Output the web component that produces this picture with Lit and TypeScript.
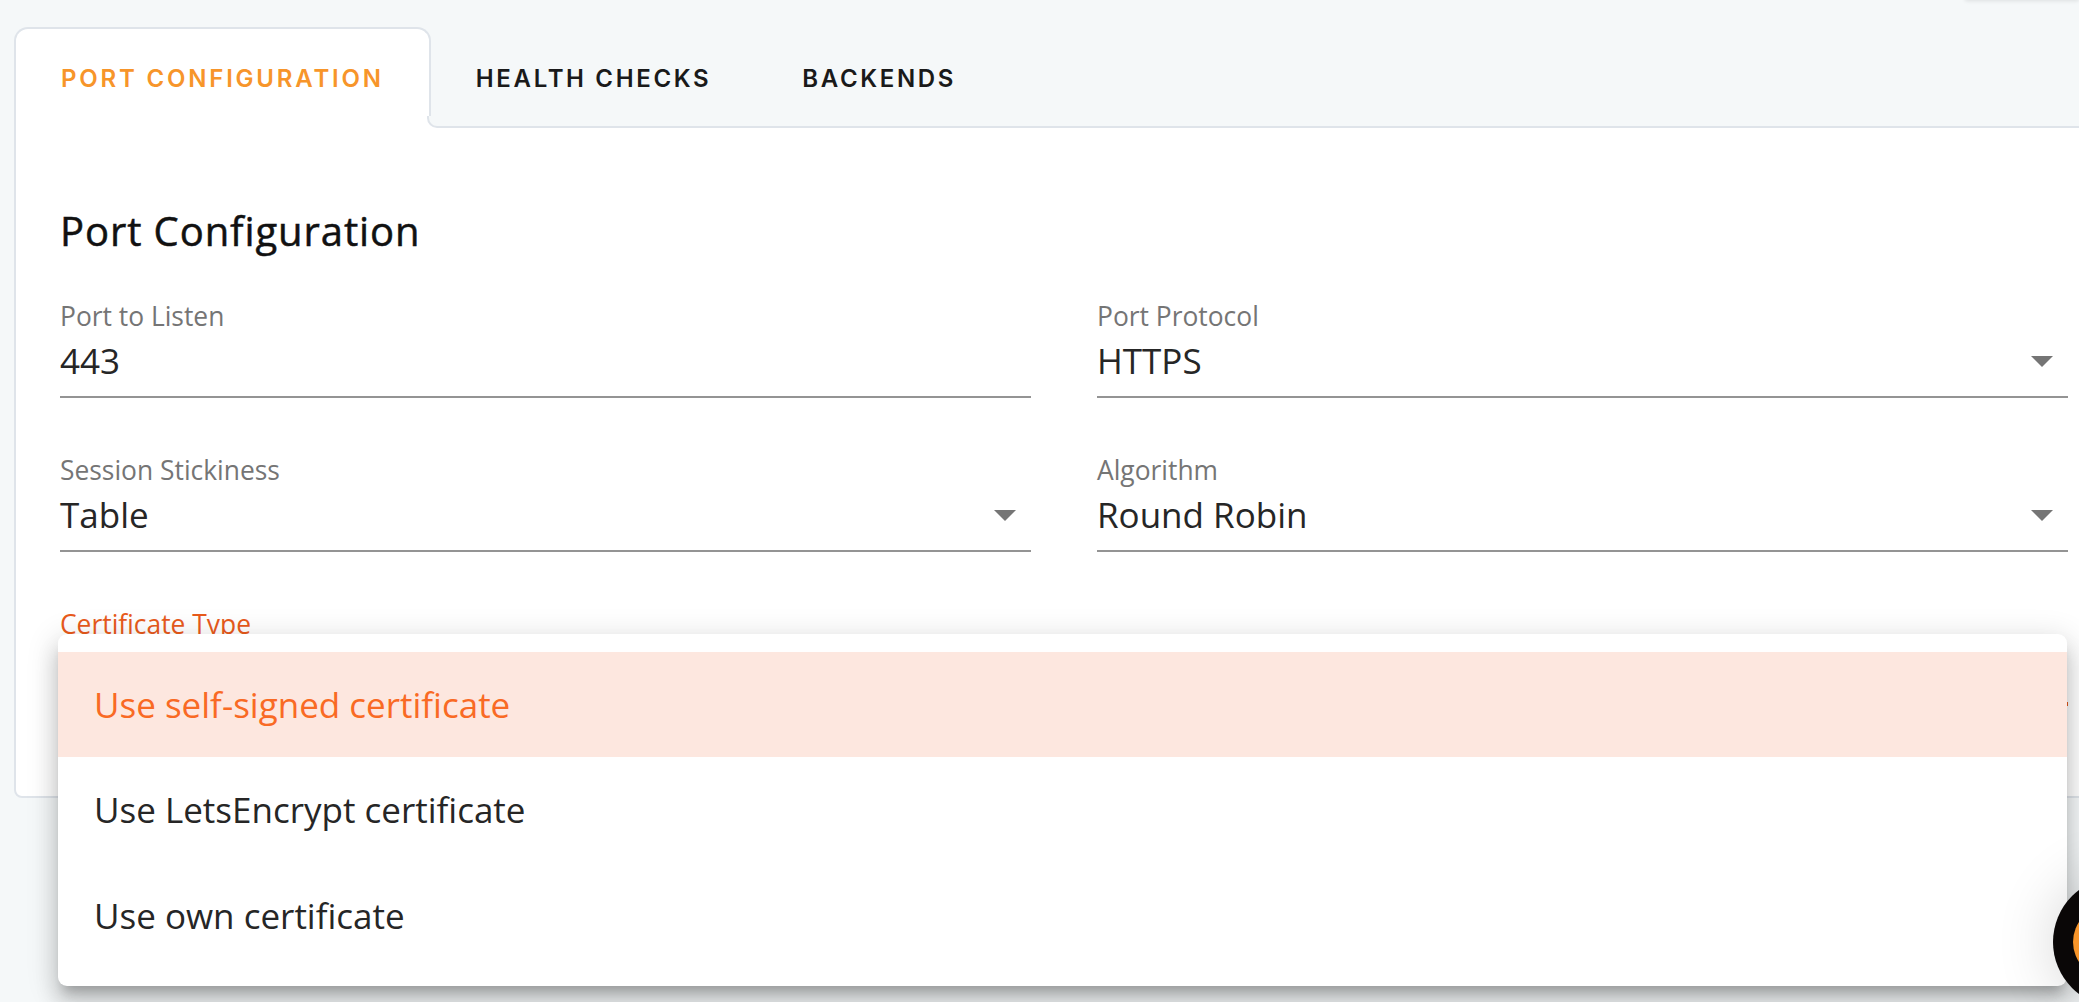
import { LitElement, html, css } from "lit";
import { customElement } from "lit/decorators.js";

@customElement("app-root")
export class AppRoot extends LitElement {
  static styles = css`
    :host {
      display: block;
      position: relative;
      height: 1002px;
      overflow: hidden;
      background: #f5f8f9;
      font-family: "Open Sans", sans-serif;
      color: #262626;
    }
    .page {
      padding: 27px 0 0 14px;
      width: 2120px;
    }
    .tabs {
      display: flex;
      height: 101px;
      margin-bottom: -2px;
      position: relative;
      z-index: 1;
    }
    .tab {
      display: flex;
      align-items: center;
      padding: 1px 46px 0 45px;
      font-family: "Inter", sans-serif;
      font-weight: 600;
      font-size: 24px;
      letter-spacing: 2.65px;
      color: #1a1a1a;
      box-sizing: border-box;
    }
    .tab.active {
      position: relative;
      background: #fff;
      color: #f7952a;
      border: 2px solid #dfe4ea;
      border-bottom: none;
      border-radius: 14px 14px 0 0;
      padding: 0 45px 1px;
      letter-spacing: 2.8px;
    }
    .tab.active::before {
      content: "";
      position: absolute;
      left: 100%;
      margin-left: -2px;
      bottom: 0;
      width: 12px;
      height: 12px;
      background: #fff;
    }
    .tab.active::after {
      content: "";
      position: absolute;
      left: 100%;
      margin-left: -2px;
      bottom: 0;
      width: 10px;
      height: 10px;
      background: #f5f8f9;
      border-left: 2px solid #dfe4ea;
      border-bottom: 2px solid #dfe4ea;
      border-bottom-left-radius: 10px;
    }
    .card {
      background: #fff;
      border: 2px solid #dfe4ea;
      border-radius: 0 0 8px 8px;
      height: 672px;
      box-sizing: border-box;
      padding: 78px 44px 0 44px;
    }
    h2 {
      margin: 0 0 43px;
      font-size: 40px;
      line-height: 50px;
      font-weight: 500;
      letter-spacing: 0.9px;
      -webkit-text-stroke: 0.5px #111;
      color: #111;
    }
    .grid {
      display: grid;
      grid-template-columns: 971px 971px;
      column-gap: 66px;
      row-gap: 55px;
    }
    .field {
      display: flex;
      flex-direction: column;
      height: 99px;
      box-sizing: border-box;
      border-bottom: 2px solid #949494;
    }
    .field .label {
      font-size: 26.4px;
      line-height: 34px;
      color: #757575;
    }
    .field .value {
      display: flex;
      justify-content: space-between;
      align-items: center;
      font-size: 35px;
      line-height: 48px;
      margin-top: 4px;
    }
    .arrow {
      width: 0;
      height: 0;
      border-left: 11px solid transparent;
      border-right: 11px solid transparent;
      border-top: 11px solid #757575;
      margin-right: 15px;
    }
    .field.focused {
      grid-column: 1 / span 2;
      border-bottom: 4px solid #e85a1c;
    }
    .field.focused .label {
      color: #e85a1c;
    }
    .menu {
      position: absolute;
      left: 58px;
      top: 634px;
      width: 2009px;
      height: 352px;
      padding: 18px 0;
      box-sizing: border-box;
      background: #fff;
      border-radius: 9px;
      box-shadow: 0 11px 11px -6px rgba(0, 0, 0, 0.2),
        0 17px 21px 2px rgba(0, 0, 0, 0.14), 0 6px 30px 4px rgba(0, 0, 0, 0.12);
    }
    .item {
      display: flex;
      align-items: center;
      height: 105.33px;
      padding: 0 36px;
      font-size: 35px;
    }
    .item.selected {
      background: #fde7df;
      color: #f96a24;
    }
    .fab {
      position: absolute;
      left: 2053px;
      top: 877px;
      width: 130px;
      height: 130px;
      border-radius: 50%;
      background: #0a0707;
      box-shadow: 0 0 60px rgba(0, 0, 0, 0.16);
    }
    .fab-inner {
      position: absolute;
      left: 20px;
      top: 29px;
      width: 72px;
      height: 72px;
      border-radius: 50%;
      background: #f7952a;
    }
    .topbar {
      position: absolute;
      top: -20px;
      right: 0;
      width: 114px;
      height: 20px;
      background: #f5f8f9;
      box-shadow: 0 1px 4px rgba(0, 0, 0, 0.1);
    }
  `;

  private field(label: string, value: string, select = true) {
    return html`<div class="field">
      <div class="label">${label}</div>
      <div class="value">
        <span>${value}</span>${select ? html`<span class="arrow"></span>` : ""}
      </div>
    </div>`;
  }

  render() {
    return html`
      <div class="topbar"></div>
      <div class="page">
        <div class="tabs">
          <div class="tab active">PORT CONFIGURATION</div>
          <div class="tab">HEALTH CHECKS</div>
          <div class="tab">BACKENDS</div>
        </div>
        <div class="card">
          <h2>Port Configuration</h2>
          <div class="grid">
            ${this.field("Port to Listen", "443", false)}
            ${this.field("Port Protocol", "HTTPS")}
            ${this.field("Session Stickiness", "Table")}
            ${this.field("Algorithm", "Round Robin")}
            <div class="field focused">
              <div class="label">Certificate Type</div>
            </div>
          </div>
        </div>
      </div>
      <div class="menu">
        <div class="item selected">Use self-signed certificate</div>
        <div class="item">Use LetsEncrypt certificate</div>
        <div class="item">Use own certificate</div>
      </div>
      <div class="fab"><div class="fab-inner"></div></div>
    `;
  }
}
